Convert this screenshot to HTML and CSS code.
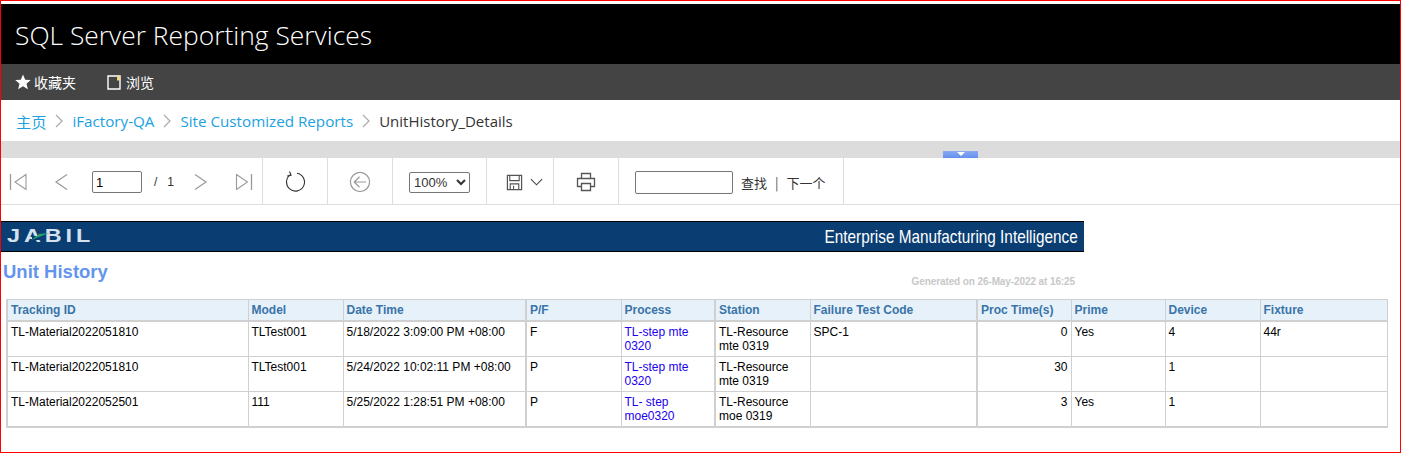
FILE: index.html
```html
<!DOCTYPE html>
<html lang="en">
<head>
    <meta charset="UTF-8">
    <meta name="viewport" content="width=device-width, initial-scale=1.0">
    <title>SQL Server Reporting Services</title>
    <link rel="stylesheet" href="styles.css">
</head>
<body>
    <div class="page">
        <header class="title-bar">SQL Server Reporting Services</header>

        <nav class="main-nav">
            <a class="nav-item">
                <svg width="16" height="16" viewBox="0 0 16 16"><polygon fill="#fff" points="8,0.5 10.2,5.7 15.8,6.1 11.5,9.7 12.9,15.2 8,12.3 3.1,15.2 4.5,9.7 0.2,6.1 5.8,5.7"/></svg>
                收藏夹
            </a>
            <a class="nav-item nav-browse">
                <svg width="14" height="15" viewBox="0 0 14 15"><path d="M1 1h12v13H1z" fill="none" stroke="#fff" stroke-width="1.4"/><path d="M10 0.5h3.5v5H10z" fill="#f0d890"/></svg>
                浏览
            </a>
        </nav>

        <div class="breadcrumb">
            <a>主页</a>
            <svg class="crumb-sep" width="8" height="14" viewBox="0 0 8 14"><path d="M1 1l6 6-6 6" fill="none" stroke="#aaa" stroke-width="1.2"/></svg>
            <a>iFactory-QA</a>
            <svg class="crumb-sep" width="8" height="14" viewBox="0 0 8 14"><path d="M1 1l6 6-6 6" fill="none" stroke="#aaa" stroke-width="1.2"/></svg>
            <a>Site Customized Reports</a>
            <svg class="crumb-sep" width="8" height="14" viewBox="0 0 8 14"><path d="M1 1l6 6-6 6" fill="none" stroke="#aaa" stroke-width="1.2"/></svg>
            <span class="crumb-current">UnitHistory_Details</span>
        </div>

        <div class="splitter">
            <div class="splitter-tab"><span class="splitter-arrow"></span></div>
        </div>

        <div class="toolbar">
            <div class="tool-group group-paging">
                <svg class="ico-first" width="20" height="20" viewBox="0 0 20 20"><path d="M2.5 2v16" stroke="#999" stroke-width="1.3" fill="none"/><path d="M18 2.5L7 10l11 7.5z" stroke="#999" stroke-width="1.1" fill="none"/></svg>
                <svg class="ico-prev" width="20" height="20" viewBox="0 0 20 20"><path d="M15 2.5L4 10l11 7.5" stroke="#999" stroke-width="1.2" fill="none"/></svg>
                <input class="page-input" type="text" value="1">
                <span class="page-total">/&nbsp;&nbsp;&nbsp;1</span>
                <svg class="ico-next" width="20" height="20" viewBox="0 0 20 20"><path d="M4 2.5L15 10 4 17.5" stroke="#999" stroke-width="1.2" fill="none"/></svg>
                <svg class="ico-last" width="20" height="20" viewBox="0 0 20 20"><path d="M3.5 2.5L14.5 10l-11 7.5z" stroke="#999" stroke-width="1.1" fill="none"/><path d="M18.5 2v16" stroke="#999" stroke-width="1.3" fill="none"/></svg>
            </div>
            <div class="tool-group group-refresh">
                <svg width="22" height="22" viewBox="0 0 22 22"><path d="M6.5 3.6A9 9 0 1 0 13 2.2" fill="none" stroke="#333" stroke-width="1.1"/><path d="M5.5 0.5l1.6 3.6-3.8 1" fill="none" stroke="#333" stroke-width="1.1"/></svg>
            </div>
            <div class="tool-group group-back">
                <svg width="22" height="22" viewBox="0 0 22 22"><circle cx="11" cy="11" r="9.6" fill="none" stroke="#999" stroke-width="1.2"/><path d="M17 11H5M10.5 5.8L5.2 11l5.3 5.2" fill="none" stroke="#999" stroke-width="1.2"/></svg>
            </div>
            <div class="tool-group group-zoom">
                <select class="zoom-select"><option>100%</option></select>
            </div>
            <div class="tool-group group-save">
                <svg width="17" height="17" viewBox="0 0 18 18"><path d="M1.5 1.5h15v15h-15z" fill="none" stroke="#555" stroke-width="1.3"/><path d="M4 1.5v5.5h10V1.5M4.5 16.5v-6h9v6M8 12.5v4" fill="none" stroke="#555" stroke-width="1.2"/></svg>
                <svg width="13" height="8" viewBox="0 0 14 8"><path d="M1 1l6 6 6-6" fill="none" stroke="#444" stroke-width="1.2"/></svg>
            </div>
            <div class="tool-group group-print">
                <svg width="20" height="20" viewBox="0 0 20 20"><path d="M5.5 6.5V1.5h9v5M5.5 14.5h-4v-8h17v8h-4" fill="none" stroke="#555" stroke-width="1.3"/><path d="M5.5 11.5h9v7h-9z" fill="none" stroke="#555" stroke-width="1.3"/></svg>
            </div>
            <div class="tool-group group-find">
                <input class="find-input" type="text">
                <a class="find-link">查找</a>
                <span class="find-sep">|</span>
                <a class="find-link">下一个</a>
            </div>
        </div>

        <main class="report">
            <div class="banner">
                <div class="logo">
                    <span class="logo-text">JABIL</span>
                    <svg class="logo-mark" width="24" height="10" viewBox="0 0 24 10"><rect x="4" y="4" width="8" height="4" fill="#0a3e73"/><polygon fill="#2aa56e" points="3,8 11,2 21,1 12,4.5"/></svg>
                </div>
                <span class="banner-title">Enterprise Manufacturing Intelligence</span>
            </div>

            <div class="report-head">
                <h1>Unit History</h1>
                <span class="generated">Generated on 26-May-2022 at 16:25</span>
            </div>

            <table class="history">
                <colgroup>
                    <col class="c1 thick"><col class="c2"><col class="c3"><col class="c4 thick"><col class="c5"><col class="c6 thick"><col class="c7"><col class="c8 thick"><col class="c9"><col class="c10"><col class="c11">
                </colgroup>
                <thead>
                    <tr>
                        <th>Tracking ID</th><th>Model</th><th>Date Time</th><th>P/F</th><th>Process</th><th>Station</th><th>Failure Test Code</th><th>Proc Time(s)</th><th>Prime</th><th>Device</th><th>Fixture</th>
                    </tr>
                </thead>
                <tbody>
                    <tr>
                        <td>TL-Material2022051810</td><td>TLTest001</td><td>5/18/2022 3:09:00 PM +08:00</td><td>F</td><td class="link">TL-step mte 0320</td><td>TL-Resource mte 0319</td><td>SPC-1</td><td class="num">0</td><td>Yes</td><td>4</td><td>44r</td>
                    </tr>
                    <tr>
                        <td>TL-Material2022051810</td><td>TLTest001</td><td>5/24/2022 10:02:11 PM +08:00</td><td>P</td><td class="link">TL-step mte 0320</td><td>TL-Resource mte 0319</td><td></td><td class="num">30</td><td></td><td>1</td><td></td>
                    </tr>
                    <tr>
                        <td>TL-Material2022052501</td><td>111</td><td>5/25/2022 1:28:51 PM +08:00</td><td>P</td><td class="link">TL- step moe0320</td><td>TL-Resource moe 0319</td><td></td><td class="num">3</td><td>Yes</td><td>1</td><td></td>
                    </tr>
                </tbody>
            </table>
        </main>
    </div>
</body>
</html>
```

FILE: styles.css
```css
* {
    margin: 0;
    padding: 0;
    box-sizing: border-box;
}

body {
    font-family: "Liberation Sans", "Noto Sans CJK SC", sans-serif;
    background-color: #fff;
    color: #000;
    overflow: hidden;
}

.page {
    height: 453px;
    padding-top: 3px;
    border: 1px solid #f00;
    overflow: hidden;
}

/* top bars */
.title-bar {
    height: 60px;
    padding-left: 14px;
    background-color: #000;
    color: #fff;
    font-family: "Open Sans", sans-serif;
    font-weight: 300;
    font-size: 26.4px;
    line-height: 62px;
}

.main-nav {
    display: flex;
    align-items: center;
    height: 36px;
    padding-left: 14px;
    background-color: #444;
}

.nav-item {
    display: flex;
    align-items: center;
    gap: 3px;
    color: #fff;
    font-family: "Noto Sans CJK SC", sans-serif;
    font-size: 14px;
}

.nav-browse {
    margin-left: 31px;
    gap: 5px;
}

.breadcrumb {
    display: flex;
    align-items: center;
    gap: 9px;
    height: 41px;
    padding-left: 15px;
    font-family: "Open Sans", "Noto Sans CJK SC", sans-serif;
    font-size: 15.2px;
    color: #1ba1e2;
}

.crumb-current {
    color: #333;
    font-size: 15px;
}

.splitter {
    display: flex;
    align-items: flex-end;
    height: 17px;
    padding-left: 942px;
    background-color: #dcdcdc;
}

.splitter-tab {
    display: flex;
    justify-content: center;
    width: 35px;
    height: 7px;
    padding-top: 1px;
    background: linear-gradient(#8aaaf2, #6490ec);
}

.splitter-arrow {
    width: 0;
    height: 0;
    border-left: 4px solid transparent;
    border-right: 4px solid transparent;
    border-top: 4px solid #fff;
}

/* report toolbar */
.toolbar {
    display: flex;
    height: 47px;
    border-bottom: 1px solid #ddd;
    font-size: 13px;
    color: #333;
}

.tool-group {
    display: flex;
    align-items: center;
    padding-top: 2px;
    border-right: 1px solid #ddd;
}

.group-paging {
    width: 262px;
    padding-left: 7px;
}

.ico-prev { margin-left: 24px; }
.ico-next { margin-left: 16px; }
.ico-last { margin-left: 22px; }

.page-input {
    width: 50px;
    height: 22px;
    margin-left: 20px;
    padding-left: 3px;
    border: 1px solid #767676;
    border-radius: 2px;
    font-family: "Liberation Sans", sans-serif;
    font-size: 13px;
}

.page-total {
    width: 21px;
    margin-left: 12px;
    font-size: 12px;
    white-space: nowrap;
}

.group-refresh,
.group-back {
    justify-content: center;
    width: 65px;
}

.group-zoom {
    justify-content: center;
    width: 94px;
}

.zoom-select {
    width: 61px;
    height: 21px;
    border: 1px solid #767676;
    border-radius: 2px;
    background-color: #fff;
    font-family: "Liberation Sans", sans-serif;
    font-size: 13px;
    color: #333;
}

.group-save {
    gap: 7px;
    width: 67px;
    padding-left: 19px;
}

.group-print {
    justify-content: center;
    width: 65px;
}

.group-find {
    width: 225px;
    padding-left: 16px;
    font-family: "Noto Sans CJK SC", sans-serif;
}

.find-input {
    width: 98px;
    height: 23px;
    margin-right: 8px;
    border: 1px solid #767676;
    border-radius: 2px;
}

.find-sep {
    margin: 0 8px;
    color: #555;
}

/* report body */
.report {
    padding-top: 16px;
}

.banner {
    display: flex;
    align-items: center;
    justify-content: space-between;
    width: 1083px;
    height: 31px;
    padding: 0 6px 0 6px;
    border-top: 1px solid #000;
    border-bottom: 1px solid #000;
    background-color: #0a3e73;
}

.logo {
    position: relative;
    width: 84px;
    height: 18px;
    margin-top: -2px;
}

.logo-text {
    display: block;
    font-weight: bold;
    font-size: 18px;
    line-height: 18px;
    letter-spacing: 3px;
    color: #d5e2ee;
    transform: scaleX(1.3);
    transform-origin: left center;
}

/* green swoosh through the A of the logo */
.logo-mark {
    position: absolute;
    left: 21px;
    top: 5px;
}

.banner-title {
    padding-top: 1px;
    color: #fff;
    font-size: 19px;
    white-space: nowrap;
    transform: scaleX(0.807);
    transform-origin: right center;
}

.report-head {
    display: flex;
    align-items: flex-start;
    justify-content: space-between;
    width: 1083px;
    height: 47px;
    padding: 9px 9px 0 2px;
}

h1 {
    font-size: 18.5px;
    color: #6495ed;
}

.generated {
    margin-top: 15px;
    font-size: 10px;
    font-weight: bold;
    color: #c8c8c8;
    letter-spacing: -0.1px;
}

.history {
    margin-left: 5px;
    width: 1380px;
    table-layout: fixed;
    border-collapse: collapse;
    font-size: 12px;
    line-height: 14px;
}

.history col { border-left: 1px solid #d0d0d0; }
.history col.thick { border-left-width: 2px; }

.c1 { width: 241px; }
.c2 { width: 95px; }
.c3 { width: 183px; }
.c4 { width: 95px; }
.c5 { width: 94px; }
.c6 { width: 95px; }
.c7 { width: 167px; }
.c8 { width: 94px; }
.c9 { width: 94px; }
.c10 { width: 95px; }
.c11 { width: 127px; }

.history th {
    height: 21px;
    padding: 1px 3px 0;
    border: 1px solid #d0d0d0;
    border-bottom: 2px solid #d0d0d0;
    background-color: #e6f1fa;
    color: #3a74a8;
    font-weight: bold;
    text-align: left;
}

.history td {
    height: 35px;
    padding: 3px;
    border: 1px solid #d0d0d0;
    vertical-align: top;
}

.history tbody tr:last-child td {
    border-bottom-width: 2px;
}

.history td.link { color: #2000f0; }
.history td.num { text-align: right; }
```
